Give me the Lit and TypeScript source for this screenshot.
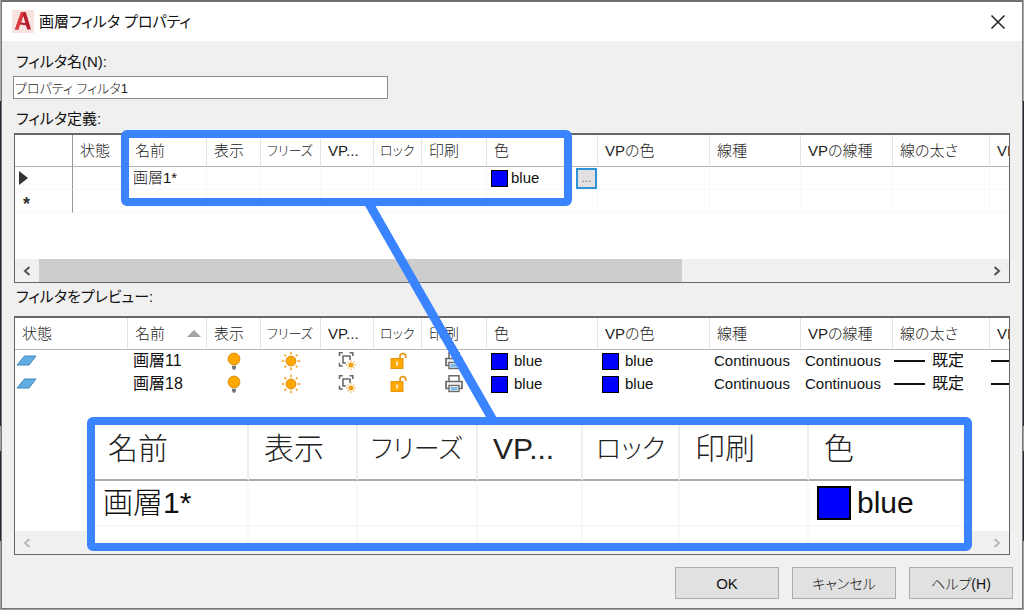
import { LitElement, html, css } from "lit";
import { customElement } from "lit/decorators.js";

interface Column {
  label: string;
  width: number;
  sorted?: boolean;
  kana?: boolean;
}

const SHARED: Column[] = [
  { label: "名前", width: 79 },
  { label: "表示", width: 54 },
  { label: "フリーズ", width: 60, kana: true },
  { label: "VP...", width: 53 },
  { label: "ロック", width: 48, kana: true },
  { label: "印刷", width: 65 },
  { label: "色", width: 111 },
  { label: "VPの色", width: 112 },
  { label: "線種", width: 91 },
  { label: "VPの線種", width: 92 },
  { label: "線の太さ", width: 97 },
  { label: "VP", width: 40 },
];

const DEFINITION: Column[] = [{ label: "", width: 58 }, { label: "状態", width: 55 }, ...SHARED];
const PREVIEW: Column[] = [
  { label: "状態", width: 113 },
  { ...SHARED[0], sorted: true },
  ...SHARED.slice(1),
];

const LENS: Column[] = [
  { label: "名前", width: 154 },
  { label: "表示", width: 109 },
  { label: "フリーズ", width: 120, kana: true },
  { label: "VP...", width: 105 },
  { label: "ロック", width: 97, kana: true },
  { label: "印刷", width: 129 },
  { label: "色", width: 155 },
];

const total = (cols: Column[]) => cols.reduce((sum, c) => sum + c.width, 0);

const logo = html`<svg class="logo" viewBox="0 0 22 23" aria-hidden="true">
  <rect width="22" height="23" fill="#f9e3e0" />
  <path d="M3 19.5 8.6 3.2Q9 2 10.3 2h2.4q1 0 1.4 1L19 19.5h-3.7l-1.4-4.3-6-.6-1.5 4.9z" fill="#b51f2b" />
  <path d="M3 19.5 8.6 3.2Q9 2 10.3 2h1.5L8 14.2 6.4 19.5z" fill="#dd3b40" />
  <path d="m11.3 6-2.2 6.6 4.3.4z" fill="#f9e3e0" />
</svg>`;

const stateIcon = html`<svg class="state" viewBox="0 0 22 11" role="img" aria-label="画層">
  <path d="M1 10 8.5 1H20l-7 9z" fill="#62ade3" stroke="#3e86b8" />
</svg>`;

const bulbIcon = html`<svg class="glyph" viewBox="0 0 20 20" role="img" aria-label="表示">
  <circle cx="10" cy="8" r="5.9" fill="#ffa800" stroke="#dc8e0c" />
  <path d="M8 14.8h4v2.200l-1.100 1.700H9.100L8 17z" fill="#777" />
</svg>`;

const sunIcon = html`<svg class="glyph" viewBox="0 0 20 20" role="img" aria-label="フリーズ解除">
  <path d="M10 .8v2.7M10 16.5v2.7M.8 10h2.7M16.5 10h2.7M3.5 3.5l1.8 1.8M14.7 14.7l1.8 1.8M3.5 16.5l1.800-1.800M14.7 5.300l1.800-1.800" stroke="#f0a020" stroke-width="1.500" />
  <circle cx="10" cy="10" r="4.900" fill="#ffa800" stroke="#dc8e0c" />
</svg>`;

const viewportIcon = html`<svg class="glyph" viewBox="0 0 20 20" role="img" aria-label="VP フリーズ解除">
  <path d="M2.500 5V1.700h3.300M12.500 1.700h3.300V5M2.500 11.700V15h3.300M9 12H6V5h7v4" fill="none" stroke="#6a6a6a" stroke-width="1.600" />
  <circle cx="14" cy="14" r="2.500" fill="#f0a010" />
  <path d="M14 9.200v1.300M14 17.500v1.300M9.200 14h1.300M17.500 14h1.300M10.600 10.600l1 1M16.400 16.400l1 1M10.600 17.400l1-1M16.400 11.600l1-1" stroke="#eeb050" stroke-width="1.300" />
</svg>`;

const lockIcon = html`<svg class="glyph" viewBox="0 0 20 20" role="img" aria-label="ロック解除">
  <path d="M12 9V5.500a2.900 2.900 0 0 1 5.800 0V7" fill="none" stroke="#e39a1b" stroke-width="1.700" />
  <rect x="3" y="7.500" width="12" height="10" fill="#ffa800" stroke="#e8960c" />
  <path d="M9 10.500v4" stroke="#fff3d6" stroke-width="1.700" />
</svg>`;

const printIcon = html`<svg class="glyph" viewBox="0 0 20 20" role="img" aria-label="印刷">
  <path d="M5 8V1.800h10V8" fill="#fff" stroke="#6a6a6a" stroke-width="1.500" />
  <path d="M5 14.500H2V7.500h16v7h-3" fill="#f2f2f2" stroke="#6a6a6a" stroke-width="1.700" />
  <rect x="5" y="11.500" width="10" height="6" fill="#fff" stroke="#6a6a6a" stroke-width="1.400" />
  <path d="M6.500 13h7v3.500h-7z" fill="#7fbbe6" />
</svg>`;

const chevron = (points: string) =>
  html`<svg class="chevron" viewBox="0 0 8 10" aria-hidden="true">
    <polyline points=${points} fill="none" stroke="currentColor" stroke-width="2" />
  </svg>`;

@customElement("scroll-strip")
export class ScrollStrip extends LitElement {
  static properties = { active: { type: Boolean } };
  declare active: boolean;

  static styles = css`
    :host {
      display: flex;
      height: 23px;
      background: #f0f0f0;
    }
    .arrow {
      width: 24px;
      padding: 0;
      border: 0;
      background: none;
      color: #555;
      display: flex;
      align-items: center;
      justify-content: center;
    }
    .arrow:disabled {
      color: #b8b8b8;
    }
    .track {
      flex: 1;
      display: flex;
    }
    .thumb {
      width: 68%;
      background: #cdcdcd;
    }
    .chevron {
      width: 8px;
      height: 10px;
    }
  `;

  render() {
    return html`
      <button class="arrow" aria-label="左へスクロール" ?disabled=${!this.active}>${chevron("6.500,1 2,5 6.500,9")}</button>
      <div class="track">${this.active ? html`<div class="thumb"></div>` : null}</div>
      <button class="arrow" aria-label="右へスクロール" ?disabled=${!this.active}>${chevron("1.500,1 6,5 1.500,9")}</button>
    `;
  }
}

@customElement("app-root")
export class AppRoot extends LitElement {
  static styles = css`
    :host {
      display: block;
      height: 100vh;
      font-family: "Liberation Sans", "Noto Sans CJK JP", sans-serif;
      font-size: 15px;
      font-feature-settings: "palt";
      color: #111;
    }
    * {
      box-sizing: border-box;
    }
    .desktop {
      height: 100%;
      padding: 0 1px 1px 1px;
      background: linear-gradient(#a9a9a9 0 101px, #232936 101px 426px, #a0a0a0 426px 451px, #232936 451px 541px, #a0a0a0 541px);
    }
    .window {
      position: relative;
      height: 100%;
      display: flex;
      flex-direction: column;
      border: 1px solid #777;
      border-top: 2px solid #707070;
      background: #f0f0f0;
      overflow: hidden;
    }
    .titlebar {
      flex: none;
      display: flex;
      align-items: center;
      height: 39px;
      padding: 0 16px 0 10px;
      gap: 5px;
      background: #fff;
    }
    .logo {
      width: 22px;
      height: 23px;
    }
    .title {
      flex: 1;
      margin: 0;
      font-size: 15px;
      font-weight: 400;
      line-height: 24px;
    }
    .close {
      width: 16px;
      height: 16px;
      padding: 0;
      border: 0;
      background: none;
    }
    .close svg {
      display: block;
      width: 16px;
      height: 16px;
    }
    .content {
      flex: 1;
      min-height: 0;
      display: flex;
      flex-direction: column;
      padding: 9px 11px 9px 11px;
    }
    .caption {
      flex: none;
      margin: 0;
      padding: 0 3px;
      font-size: 15px;
      font-weight: 400;
      line-height: 24px;
    }
    .name {
      flex: none;
      width: 375px;
      height: 23px;
      margin: 2px 0 8px;
      padding: 0 1px;
      border: 1px solid #8a8a8a;
      border-radius: 0;
      background: #fff;
      color: #222;
      font-family: inherit;
      font-size: 13px;
      font-weight: 300;
      font-feature-settings: inherit;
    }
    .grid {
      display: flex;
      flex-direction: column;
      margin: 0 1px;
      border: 1px solid #666;
      border-top-width: 2px;
      background: #fff;
      overflow: hidden;
    }
    .definition {
      flex: none;
      height: 150px;
      margin-top: 2px;
      margin-bottom: 2px;
    }
    .preview {
      flex: 1;
      margin-top: 7px;
      margin-bottom: 12px;
    }
    .rows {
      flex: 1;
      min-height: 0;
      overflow: hidden;
    }
    table {
      table-layout: fixed;
      border-collapse: separate;
      border-spacing: 0;
    }
    th,
    td {
      padding: 0;
      text-align: left;
      white-space: nowrap;
      overflow: hidden;
      border-right: 1px solid #f6f9fc;
      border-bottom: 1px solid #f6f9fc;
    }
    th {
      height: 32px;
      padding: 0 0 0 7px;
      font-weight: 300;
      line-height: 20px;
      color: #222;
      border-right-color: #e4e4e4;
      border-bottom-color: #b5b5b5;
    }
    th.kana {
      font-size: 13px;
      padding-left: 6px;
    }
    th .head {
      display: flex;
      align-items: center;
      justify-content: space-between;
      padding-right: 5px;
    }
    td {
      height: 23px;
      padding: 0 0 0 4px;
      line-height: 22px;
    }
    .definition td:first-child,
    .definition th:first-child {
      border-right-color: #999;
    }
    .preview td {
      border-color: transparent;
    }
    .preview .layer,
    .preview .weight {
      font-size: 16px;
    }
    .preview .layer,
    .definition .layer {
      padding-left: 5px;
    }
    .sort {
      width: 14px;
      height: 7px;
    }
    .cell {
      display: flex;
      align-items: center;
      height: 22px;
    }
    .preview td.icon {
      padding: 0;
    }
    .middle {
      justify-content: center;
    }
    .state {
      width: 22px;
      height: 11px;
    }
    .preview td.flag {
      padding: 0 0 0 1px;
    }
    .glyph {
      width: 20px;
      height: 20px;
    }
    .swatch {
      flex: none;
      width: 17px;
      height: 17px;
      border: 1px solid #000;
      background: #0000ff;
    }
    .color {
      gap: 6px;
    }
    .definition .color {
      gap: 3px;
    }
    .browse {
      width: 21px;
      height: 21px;
      margin: 0 0 0 auto;
      padding: 0;
      border: 2px solid #2f93d8;
      background: #e1e1e1;
      color: #777;
      font-family: inherit;
      font-size: 12px;
      line-height: 14px;
    }
    .stroke {
      width: 31px;
      height: 2px;
      background: #111;
    }
    .weight {
      gap: 7px;
    }
    td.tight {
      padding-left: 1px;
    }
    .marker {
      width: 9px;
      height: 14px;
    }
    .star {
      font-size: 18px;
      font-weight: 700;
      color: #333;
      padding-left: 4px;
      padding-top: 5px;
    }
    .actions {
      flex: none;
      display: flex;
      justify-content: flex-end;
      gap: 13px;
      margin-right: -2px;
    }
    .action {
      width: 104px;
      height: 32px;
      padding: 0;
      border: 1px solid #adadad;
      border-radius: 0;
      background: #e1e1e1;
      color: #111;
      font-family: inherit;
      font-size: 15px;
      font-feature-settings: inherit;
    }
    .light {
      font-weight: 300;
    }
    .action.light {
      font-size: 14px;
    }
    .annotations {
      position: absolute;
      inset: 0;
      pointer-events: none;
    }
    .frame {
      position: absolute;
      left: 119px;
      top: 128px;
      width: 451px;
      height: 76px;
      border: 8px solid #3a84ff;
      border-radius: 6px;
    }
    .leader {
      position: absolute;
      left: 363px;
      top: 200px;
      width: 134px;
      height: 220px;
    }
    .lens {
      position: absolute;
      left: 85px;
      top: 415px;
      width: 885px;
      height: 134px;
      border: 8px solid #3a84ff;
      border-radius: 6px;
      background: #fff;
      overflow: hidden;
    }
    .lens table {
      font-size: 30px;
    }
    .lens th {
      height: 56px;
      padding: 0 0 6px 15px;
      line-height: 40px;
      border-right: 2px solid #eee;
      border-bottom: 2px solid #aaa;
    }
    .lens th:first-child,
    .lens th.kana {
      padding-left: 13px;
    }
    .lens th.kana {
      font-size: 26px;
    }
    .lens th:last-child,
    .lens td:last-child {
      border-right: 0;
    }
    .lens td {
      height: 46px;
      padding-left: 8px;
      line-height: 40px;
      border-right: 2px solid #f6f9fc;
      border-bottom: 2px solid #f6f9fc;
    }
    .lens .next td {
      height: 18px;
    }
    .lens .cell {
      height: 40px;
      gap: 6px;
    }
    .lens .swatch {
      width: 34px;
      height: 34px;
      border-width: 2px;
    }
  `;

  private head(cols: Column[]) {
    return html`
      <colgroup>
        ${cols.map((c) => html`<col style="width:${c.width}px" />`)}
      </colgroup>
      <thead>
        <tr>
          ${cols.map(
            (c) => html`<th scope="col" class=${c.kana ? "kana" : ""}>
              <div class="head">
                <span>${c.label}</span>
                ${c.sorted
                  ? html`<svg class="sort" viewBox="0 0 14 7" aria-hidden="true"><path d="M0 7 7 0l7 7z" fill="#a3a3a3" /></svg>`
                  : null}
              </div>
            </th>`
          )}
        </tr>
      </thead>
    `;
  }

  private blanks(count: number) {
    return Array.from({ length: count }, () => html`<td></td>`);
  }

  private previewRow(name: string) {
    const icons = [bulbIcon, sunIcon, viewportIcon, lockIcon, printIcon];
    return html`<tr>
      <td class="flag">${stateIcon}</td>
      <td class="layer">${name}</td>
      ${icons.map((icon) => html`<td class="icon"><div class="cell middle">${icon}</div></td>`)}
      <td><div class="cell color"><span class="swatch"></span>blue</div></td>
      <td><div class="cell color"><span class="swatch"></span>blue</div></td>
      <td>Continuous</td>
      <td>Continuous</td>
      <td class="tight"><div class="cell weight"><span class="stroke"></span>既定</div></td>
      <td class="tight"><div class="cell weight"><span class="stroke"></span></div></td>
    </tr>`;
  }

  render() {
    return html`
      <div class="desktop">
        <main class="window">
          <header class="titlebar">
            ${logo}
            <h1 class="title">画層フィルタ プロパティ</h1>
            <button class="close" aria-label="閉じる">
              <svg viewBox="0 0 16 16"><path d="M1.500 1.500l13 13M14.500 1.500l-13 13" stroke="#222" stroke-width="1.500" /></svg>
            </button>
          </header>
          <div class="content">
            <label class="caption" for="filter-name">フィルタ名(N):</label>
            <input id="filter-name" class="name" type="text" .value=${"プロパティ フィルタ1"} />
            <h2 class="caption">フィルタ定義:</h2>
            <section class="grid definition">
              <div class="rows">
                <table style="width:${total(DEFINITION)}px">
                  ${this.head(DEFINITION)}
                  <tbody>
                    <tr>
                      <td>
                        <div class="cell">
                          <svg class="marker" viewBox="0 0 9 14" aria-hidden="true"><path d="M0 0l9 7L0 14z" fill="#333" /></svg>
                        </div>
                      </td>
                      <td></td>
                      <td class="layer light">画層1*</td>
                      ${this.blanks(5)}
                      <td>
                        <div class="cell color">
                          <span class="swatch"></span>blue
                          <button class="browse" aria-label="色を選択">...</button>
                        </div>
                      </td>
                      ${this.blanks(5)}
                    </tr>
                    <tr>
                      <td><div class="cell star">*</div></td>
                      ${this.blanks(13)}
                    </tr>
                  </tbody>
                </table>
              </div>
              <scroll-strip active></scroll-strip>
            </section>
            <h2 class="caption">フィルタをプレビュー:</h2>
            <section class="grid preview">
              <div class="rows">
                <table style="width:${total(PREVIEW)}px">
                  ${this.head(PREVIEW)}
                  <tbody>
                    ${["画層11", "画層18"].map((n) => this.previewRow(n))}
                  </tbody>
                </table>
              </div>
              <scroll-strip></scroll-strip>
            </section>
            <footer class="actions">
              <button class="action">OK</button>
              <button class="action light">キャンセル</button>
              <button class="action light">ヘルプ(H)</button>
            </footer>
          </div>
          <div class="annotations">
            <div class="frame"></div>
            <svg class="leader" viewBox="0 0 134 220" aria-hidden="true">
              <path d="M3 0 129 220" stroke="#3a84ff" stroke-width="9" />
            </svg>
            <div class="lens">
              <table style="width:${total(LENS)}px">
                ${this.head(LENS)}
                <tbody>
                  <tr>
                    <td class="light">画層1*</td>
                    ${this.blanks(5)}
                    <td><div class="cell"><span class="swatch"></span>blue</div></td>
                  </tr>
                  <tr class="next">${this.blanks(7)}</tr>
                </tbody>
              </table>
            </div>
          </div>
        </main>
      </div>
    `;
  }
}
